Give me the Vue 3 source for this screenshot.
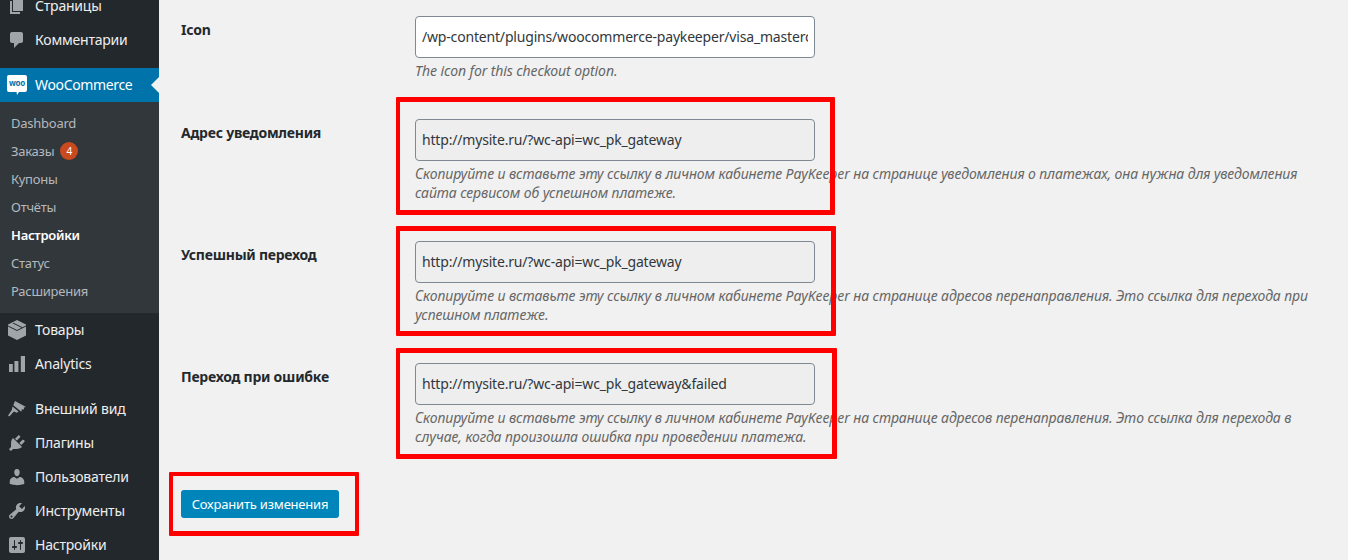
<script setup>
const topMenu = [
	{ label: 'Страницы', icon: 'M6 15V2h10v13H6zm-1 1h8v2H3V5h2v11z' },
	{ label: 'Комментарии', icon: 'M5 2h9c1.1 0 2 .9 2 2v7c0 1.1-.9 2-2 2h-2l-5 5v-5H5c-1.1 0-2-.9-2-2V4c0-1.1.9-2 2-2z' },
]

const subMenu = [
	{ label: 'Dashboard' },
	{ label: 'Заказы', badge: 4 },
	{ label: 'Купоны' },
	{ label: 'Отчёты' },
	{ label: 'Настройки', current: true },
	{ label: 'Статус' },
	{ label: 'Расширения' },
]

const shopMenu = [
	{ label: 'Товары', icon: 'M10 0l9 4.5v11L10 20l-9-4.5v-11zM1 5.5l9 4.5 9-4.5v1L10 11 1 6.5zM5.5 3.2l9 4.5 1-.5-9-4.5z' },
	{ label: 'Analytics', icon: 'M2 10h3.8v8H2zM7.4 7h4v11h-4zM13.8 2H18v16h-4.2z' },
]

const lowerMenu = [
	{ label: 'Внешний вид', icon: 'M8 2l11 6-2.2.5.4 2-2.3-.3-.6 2.6-8-6.5zM5.5 7.5l6 5-1.7 1.3-2.9-1.2-4.6 4.9-1.2-1.1 3.7-5.5z' },
	{ label: 'Плагины', icon: 'M13.11 4.36L9.87 7.6 8 5.73l3.24-3.24c.35-.34 1.05-.2 1.56.32.52.51.66 1.21.31 1.55zm-8 1.77l.91-1.12 9.01 9.01-1.19.84c-.71.71-2.63 1.16-3.82 1.16H6.14L4.9 17.26c-.59.59-1.54.59-2.12 0-.59-.58-.59-1.53 0-2.12l1.24-1.24v-3.88c0-1.13.4-3.19 1.09-3.89zm7.26 3.97l3.24-3.24c.34-.35 1.04-.21 1.55.31.52.51.66 1.21.31 1.55l-3.24 3.25z' },
	{ label: 'Пользователи', icon: 'M10 9.25c-2.27 0-2.73-3.44-2.73-3.44C7 4.02 7.82 2 9.97 2c2.16 0 2.98 2.02 2.71 3.81 0 0-.41 3.44-2.68 3.44zm0 2.57L12.72 10c2.39 0 4.52 2.33 4.52 4.53v2.49s-3.65 1.13-7.24 1.13c-3.65 0-7.24-1.13-7.24-1.13v-2.49c0-2.25 1.94-4.48 4.47-4.48z' },
	{ label: 'Инструменты', icon: 'M16.68 9.77c-1.34 1.34-3.3 1.67-4.95.99l-5.41 6.52c-.99.99-2.59.99-3.58 0s-.99-2.59 0-3.57l6.52-5.42c-.68-1.65-.35-3.61.99-4.95 1.28-1.28 3.12-1.62 4.72-1.06l-2.89 2.89 2.82 2.82 2.86-2.87c.53 1.58.18 3.39-1.08 4.65zM3.81 16.21c.4.39 1.04.39 1.43 0 .4-.4.4-1.04 0-1.43-.39-.4-1.03-.4-1.43 0-.39.39-.39 1.03 0 1.43z' },
	{ label: 'Настройки', icon: 'M18 16V4c0-1.1-.9-2-2-2H4c-1.1 0-2 .9-2 2v12c0 1.1.9 2 2 2h12c1.1 0 2-.9 2-2zM8 11h1c.55 0 1 .45 1 1s-.45 1-1 1H8v1.5c0 .28-.22.5-.5.5s-.5-.22-.5-.5V13H6c-.55 0-1-.45-1-1s.45-1 1-1h1V5.5c0-.28.22-.5.5-.5s.5.22.5.5V11zm5-2h-1c-.55 0-1-.45-1-1s.45-1 1-1h1V5.5c0-.28.22-.5.5-.5s.5.22.5.5V7h1c.55 0 1 .45 1 1s-.45 1-1 1h-1v5.5c0 .28-.22.5-.5.5s-.5-.22-.5-.5V9z' },
]

const fields = [
	{
		label: 'Icon',
		value: '/wp-content/plugins/woocommerce-paykeeper/visa_mastercard.png',
		lines: ['The icon for this checkout option.'],
	},
	{
		label: 'Адрес уведомления',
		value: 'http://mysite.ru/?wc-api=wc_pk_gateway',
		readonly: true,
		mark: 'mark-a',
		lines: [
			'Скопируйте и вставьте эту ссылку в личном кабинете PayKeeper на странице уведомления о платежах, она нужна для уведомления',
			'сайта сервисом об успешном платеже.',
		],
	},
	{
		label: 'Успешный переход',
		value: 'http://mysite.ru/?wc-api=wc_pk_gateway',
		readonly: true,
		mark: 'mark-b',
		lines: [
			'Скопируйте и вставьте эту ссылку в личном кабинете PayKeeper на странице адресов перенаправления. Это ссылка для перехода при',
			'успешном платеже.',
		],
	},
	{
		label: 'Переход при ошибке',
		value: 'http://mysite.ru/?wc-api=wc_pk_gateway&failed',
		readonly: true,
		mark: 'mark-c',
		lines: [
			'Скопируйте и вставьте эту ссылку в личном кабинете PayKeeper на странице адресов перенаправления. Это ссылка для перехода в',
			'случае, когда произошла ошибка при проведении платежа.',
		],
	},
]
</script>

<template>
	<div class="page">
		<aside class="sidebar">
			<ul class="menu">
				<li v-for="item in topMenu" :key="item.label" class="menu-item">
					<svg class="menu-icon" viewBox="0 0 20 20"><path :d="item.icon" /></svg>
					<span>{{ item.label }}</span>
				</li>
			</ul>

			<div class="menu-current">
				<svg class="woo-icon" viewBox="0 0 20 20">
					<path d="M2 0h16a2 2 0 0 1 2 2v13a2 2 0 0 1-2 2h-6l-2 3-.5-3H2a2 2 0 0 1-2-2V2a2 2 0 0 1 2-2z" />
					<text x="10" y="11" text-anchor="middle">woo</text>
				</svg>
				<span>WooCommerce</span>
			</div>

			<ul class="submenu">
				<li v-for="item in subMenu" :key="item.label" :class="{ current: item.current }">
					{{ item.label }}
					<span v-if="item.badge" class="badge">{{ item.badge }}</span>
				</li>
			</ul>

			<ul class="menu">
				<li v-for="item in shopMenu" :key="item.label" class="menu-item">
					<svg class="menu-icon" viewBox="0 0 20 20"><path fill-rule="evenodd" :d="item.icon" /></svg>
					<span>{{ item.label }}</span>
				</li>
			</ul>

			<ul class="menu lower">
				<li v-for="item in lowerMenu" :key="item.label" class="menu-item">
					<svg class="menu-icon" viewBox="0 0 20 20"><path fill-rule="evenodd" :d="item.icon" /></svg>
					<span>{{ item.label }}</span>
				</li>
			</ul>
		</aside>

		<main class="content">
			<div v-for="field in fields" :key="field.label" class="row">
				<label class="row-label">{{ field.label }}</label>
				<div class="row-field">
					<input type="text" :value="field.value" :readonly="field.readonly" :class="{ locked: field.readonly }" />
					<p class="description">
						<span v-for="line in field.lines" :key="line">{{ line }}</span>
					</p>
					<div v-if="field.mark" class="mark" :class="field.mark"></div>
				</div>
			</div>

			<div class="actions">
				<button type="button" class="save">Сохранить изменения</button>
				<div class="mark mark-save"></div>
			</div>
		</main>
	</div>
</template>

<style scoped>
.page
{
	display: flex;
	height: 560px;
	overflow: hidden;
	background: #f1f1f1;
	font-family: "Noto Sans", sans-serif;
	font-size: 14px;
	color: #23282d;
}

.sidebar
{
	flex: 0 0 159px;
	height: 571px;
	margin-top: -11px;
	background: #23282d;
	color: #eee;
}

ul
{
	margin: 0;
	padding: 0;
	list-style: none;
}

.menu-item,
.menu-current
{
	display: flex;
	align-items: center;
	height: 34px;
	letter-spacing: -0.2px;
}
.menu-item span,
.menu-current span
{
	margin-left: 8px;
	padding-bottom: 2px;
}

.menu-icon
{
	flex: none;
	width: 20px;
	height: 20px;
	margin-left: 7px;
	fill: #a0a5aa;
}

.menu-current
{
	position: relative;
	margin-top: 11px;
	background: #0073aa;
	color: #fff;
	letter-spacing: -0.35px;
}
.menu-current:after
{
	content: "";
	position: absolute;
	right: 0;
	top: 9px;
	border: 8px solid transparent;
	border-right-color: #f1f1f1;
	border-left-width: 0;
}

.woo-icon
{
	flex: none;
	width: 20px;
	height: 20px;
	margin-left: 7px;
	fill: #fff;
}
.woo-icon text
{
	fill: #0073aa;
	font-family: "Noto Sans", sans-serif;
	font-size: 8px;
	font-weight: 700;
}

.submenu
{
	padding: 7px 0 8px;
	background: #32373c;
	color: #b4b9be;
	font-size: 13px;
	letter-spacing: -0.25px;
}
.submenu li
{
	display: flex;
	align-items: center;
	height: 28px;
	padding-left: 11px;
}
.submenu li.current
{
	color: #fff;
	font-weight: 600;
}

.badge
{
	display: flex;
	align-items: center;
	justify-content: center;
	width: 18px;
	height: 18px;
	margin-left: 6px;
	border-radius: 50%;
	background: #ca4a1f;
	color: #fff;
	font-size: 10px;
}

.lower
{
	margin-top: 11px;
}

.content
{
	flex: 1;
	min-width: 0;
	padding: 16px 0 0 22px;
}

.row
{
	display: flex;
	padding-bottom: 39px;
}

.row-label
{
	flex: 0 0 234px;
	padding-top: 4px;
	line-height: 20px;
	font-weight: 700;
	font-size: 14px;
	letter-spacing: -0.25px;
}

.row-field
{
	position: relative;
}

input
{
	display: block;
	box-sizing: border-box;
	width: 400px;
	height: 42px;
	padding: 0 6px 2px;
	border: 1px solid #7e8993;
	border-radius: 4px;
	background: #fff;
	color: #32373c;
	font-family: inherit;
	font-size: 14px;
	letter-spacing: -0.18px;
	outline: none;
}
input.locked
{
	background: #eee;
}

.description
{
	margin: 3px 0 0;
	color: #666;
	font-style: italic;
	font-size: 14px;
	line-height: 19px;
	letter-spacing: -0.09px;
	white-space: nowrap;
}
.description span
{
	display: block;
}

.actions
{
	position: relative;
	margin-top: 5px;
}

.save
{
	display: block;
	width: 158px;
	height: 28px;
	padding: 0;
	border: none;
	border-radius: 3px;
	background: #0085ba;
	color: #fff;
	font-family: inherit;
	font-size: 13px;
	letter-spacing: -0.2px;
}

/* hand-drawn highlights from the screenshot */
.mark
{
	position: absolute;
	box-sizing: border-box;
	border: solid #f00;
	border-width: 5px 5px 5px 4px;
	border-radius: 1px;
	pointer-events: none;
}
.mark-a
{
	left: -19px;
	top: -22px;
	width: 439px;
	height: 118px;
}
.mark-b
{
	left: -19px;
	top: -15px;
	width: 440px;
	height: 110px;
}
.mark-c
{
	left: -19px;
	top: -15px;
	width: 441px;
	height: 111px;
}
.mark-save
{
	left: -12px;
	top: -18px;
	width: 190px;
	height: 64px;
	border-width: 4px 4px 5px;
}
</style>

<style>
html, body
{
	background: #f1f1f1;
	overflow: hidden;
}
</style>
